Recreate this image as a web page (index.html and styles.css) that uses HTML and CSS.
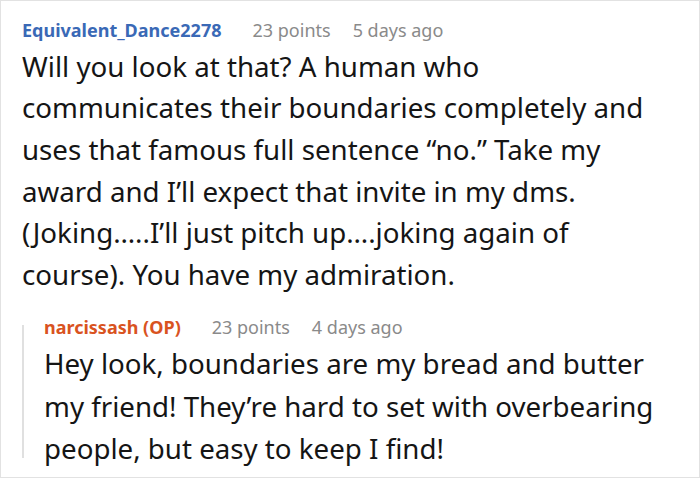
FILE: index.html
```
<!DOCTYPE html>
<html>
<head>
<meta charset="utf-8">
<link rel="stylesheet" href="styles.css">
</head>
<body>
<div class="card">
  <div class="meta">
    <span class="user">Equivalent_Dance2278</span>
    <span class="info">23 points</span>
    <span class="info">5 days ago</span>
  </div>
  <p class="text">Will you look at that? A human who communicates their boundaries completely and uses that famous full sentence “no.” Take my award and I’ll expect that invite in my dms. (Joking…..I’ll just pitch up….joking again of course). You have my admiration.</p>
  <div class="reply">
    <div class="meta">
      <span class="user op">narcissash (OP)</span>
      <span class="info">23 points</span>
      <span class="info">4 days ago</span>
    </div>
    <p class="text">Hey look, boundaries are my bread and butter my friend! They’re hard to set with overbearing people, but easy to keep I find!</p>
  </div>
</div>
</body>
</html>
```

FILE: styles.css
```
html, body {
  margin: 0;
  padding: 0;
  background: #ffffff;
}
.card {
  width: 700px;
  height: 478px;
  box-sizing: border-box;
  border: 1px solid #e2e2e2;
  padding: 17px 40px 0 21px;
  font-family: "Noto Sans", "Open Sans", sans-serif;
  color: #151515;
  overflow: hidden;
}
.meta {
  display: flex;
  gap: 22px;
  font-size: 18px;
  line-height: 24px;
  margin-bottom: 3.5px;
}
.user {
  font-weight: 700;
  color: #3a69b6;
  margin-right: 9px;
}
.user.op {
  color: #d9531f;
}
.info {
  color: #8a8a8a;
}
.text {
  margin: 0;
  font-size: 27.7px;
  line-height: 41.7px;
}
.reply {
  margin-top: 19px;
  padding-left: 22px;
  background: linear-gradient(#e0e0e0, #e0e0e0) no-repeat left 0 top 10px / 2px calc(100% - 22px);
}
.reply .text {
  line-height: 42.5px;
}
```
